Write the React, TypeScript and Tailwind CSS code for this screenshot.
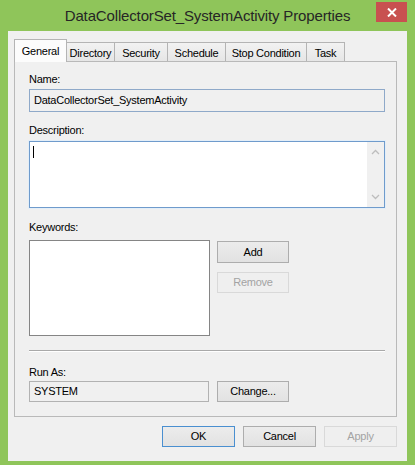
const font = { fontFamily: '"Liberation Sans", Arial, sans-serif' }

const Tab = ({ label, w, active }: { label: string; w: string; active?: boolean }) => {
  if (active) {
    return (
      <div className={`${w} h-[23px] -mb-px relative z-10 bg-[#fcfcfc] border border-b-0 border-[#b4b4b4] flex justify-center pt-[3px] text-[11px] tracking-[-0.25px] text-black`}>
        {label}
      </div>
    )
  }
  return (
    <div className={`${w} h-[19px] -ml-px bg-gradient-to-b from-[#f2f2f2] to-[#e6e6e6] border border-b-0 border-[#b4b4b4] flex justify-center pt-[2px] text-[11px] tracking-[-0.25px] text-black`}>
      {label}
    </div>
  )
}

const Btn = ({ label, w, h, disabled, primary }: { label: string; w: string; h: string; disabled?: boolean; primary?: boolean }) => (
  <div
    className={`${w} ${h} flex items-center justify-center text-[11px] tracking-[-0.25px] border ${
      disabled
        ? 'border-[#d9d9d9] bg-[#efefef] text-[#a3a3a3]'
        : primary
        ? 'border-[#4a8fd0] bg-gradient-to-b from-[#ececec] to-[#e2e2e2] text-black'
        : 'border-[#adadad] bg-gradient-to-b from-[#ececec] to-[#e2e2e2] text-black'
    }`}
  >
    {label}
  </div>
)

export default function App() {
  return (
    <div style={font} className="w-[415px] h-[465px] bg-[#8fc55a] flex flex-col overflow-hidden">
      {/* title bar */}
      <div className="h-[31px] relative flex items-center justify-center">
        <span className="text-[15px] tracking-[-0.15px] text-[#262626] mt-[1px]">DataCollectorSet_SystemActivity Properties</span>
        <div className="absolute right-[8px] top-[2px] w-[31px] h-[20px] bg-[#c85150] flex items-center justify-center">
          <svg width="10" height="9" viewBox="0 0 10 9">
            <path d="M1 0.5 L9 8.5 M9 0.5 L1 8.5" stroke="#fff" strokeWidth="2" />
          </svg>
        </div>
      </div>

      {/* client area */}
      <div className="mx-[8px] h-[430px] bg-[#f0f0f0] flex flex-col pl-[6px] pr-[10px] pt-[8px]">
        {/* tabs */}
        <div className="flex items-end h-[22px]">
          <Tab label="General" w="w-[53px]" active />
          <Tab label="Directory" w="w-[49px]" />
          <Tab label="Security" w="w-[54px]" />
          <Tab label="Schedule" w="w-[59px]" />
          <Tab label="Stop Condition" w="w-[82px]" />
          <Tab label="Task" w="w-[39px]" />
        </div>

        {/* panel */}
        <div className="h-[356px] border border-[#b9b9b9] bg-[#f0f0f0] flex flex-col pl-[14px] pr-[11px] pt-[10px] text-[11px] tracking-[-0.25px] text-black">
          <div className="h-[14px] leading-[14px]">Name:</div>
          <div className="mt-[3px] h-[23px] border border-[#8fa9c9] bg-[#f0f0f0] flex items-center pl-[4px]">
            DataCollectorSet_SystemActivity
          </div>

          <div className="mt-[11px] h-[14px] leading-[14px]">Description:</div>
          <div className="mt-[4px] h-[67px] border border-[#6f9bcc] bg-white flex shadow-[0_0_0_1px_#e3eef8]">
            <div className="flex-1 pl-[3px] pt-[4px]">
              <div className="w-px h-[12px] bg-black" />
            </div>
            <div className="w-[17px] bg-[#f0f0f0] flex flex-col items-center justify-between py-[7px]">
              <svg width="9" height="6" viewBox="0 0 9 6">
                <path d="M1 5 L4.5 1.5 L8 5" stroke="#bdbdbd" strokeWidth="1.3" fill="none" />
              </svg>
              <svg width="9" height="6" viewBox="0 0 9 6">
                <path d="M1 1 L4.5 4.5 L8 1" stroke="#bdbdbd" strokeWidth="1.3" fill="none" />
              </svg>
            </div>
          </div>

          <div className="mt-[12px] h-[14px] leading-[14px]">Keywords:</div>
          <div className="mt-[6px] flex gap-[7px]">
            <div className="w-[181px] h-[96px] border border-[#858585] bg-white" />
            <div className="flex flex-col pt-px">
              <Btn label="Add" w="w-[72px]" h="h-[22px]" />
              <div className="mt-[9px]">
                <Btn label="Remove" w="w-[72px]" h="h-[21px]" disabled />
              </div>
            </div>
          </div>

          <div className="mt-[14px] h-[2px] border-t border-[#a9a9a9] border-b border-b-white" />

          <div className="mt-[13px] h-[14px] leading-[14px]">Run As:</div>
          <div className="mt-[2px] flex gap-[8px]">
            <div className="w-[180px] h-[21px] border border-[#b2b2b2] bg-[#f0f0f0] flex items-center pl-[4px]">SYSTEM</div>
            <Btn label="Change..." w="w-[72px]" h="h-[21px]" />
          </div>
        </div>

        {/* dialog buttons */}
        <div className="mt-[9px] flex justify-end gap-[8px]">
          <Btn label="OK" w="w-[73px]" h="h-[21px]" primary />
          <Btn label="Cancel" w="w-[73px]" h="h-[21px]" />
          <Btn label="Apply" w="w-[73px]" h="h-[21px]" disabled />
        </div>
      </div>
    </div>
  )
}
